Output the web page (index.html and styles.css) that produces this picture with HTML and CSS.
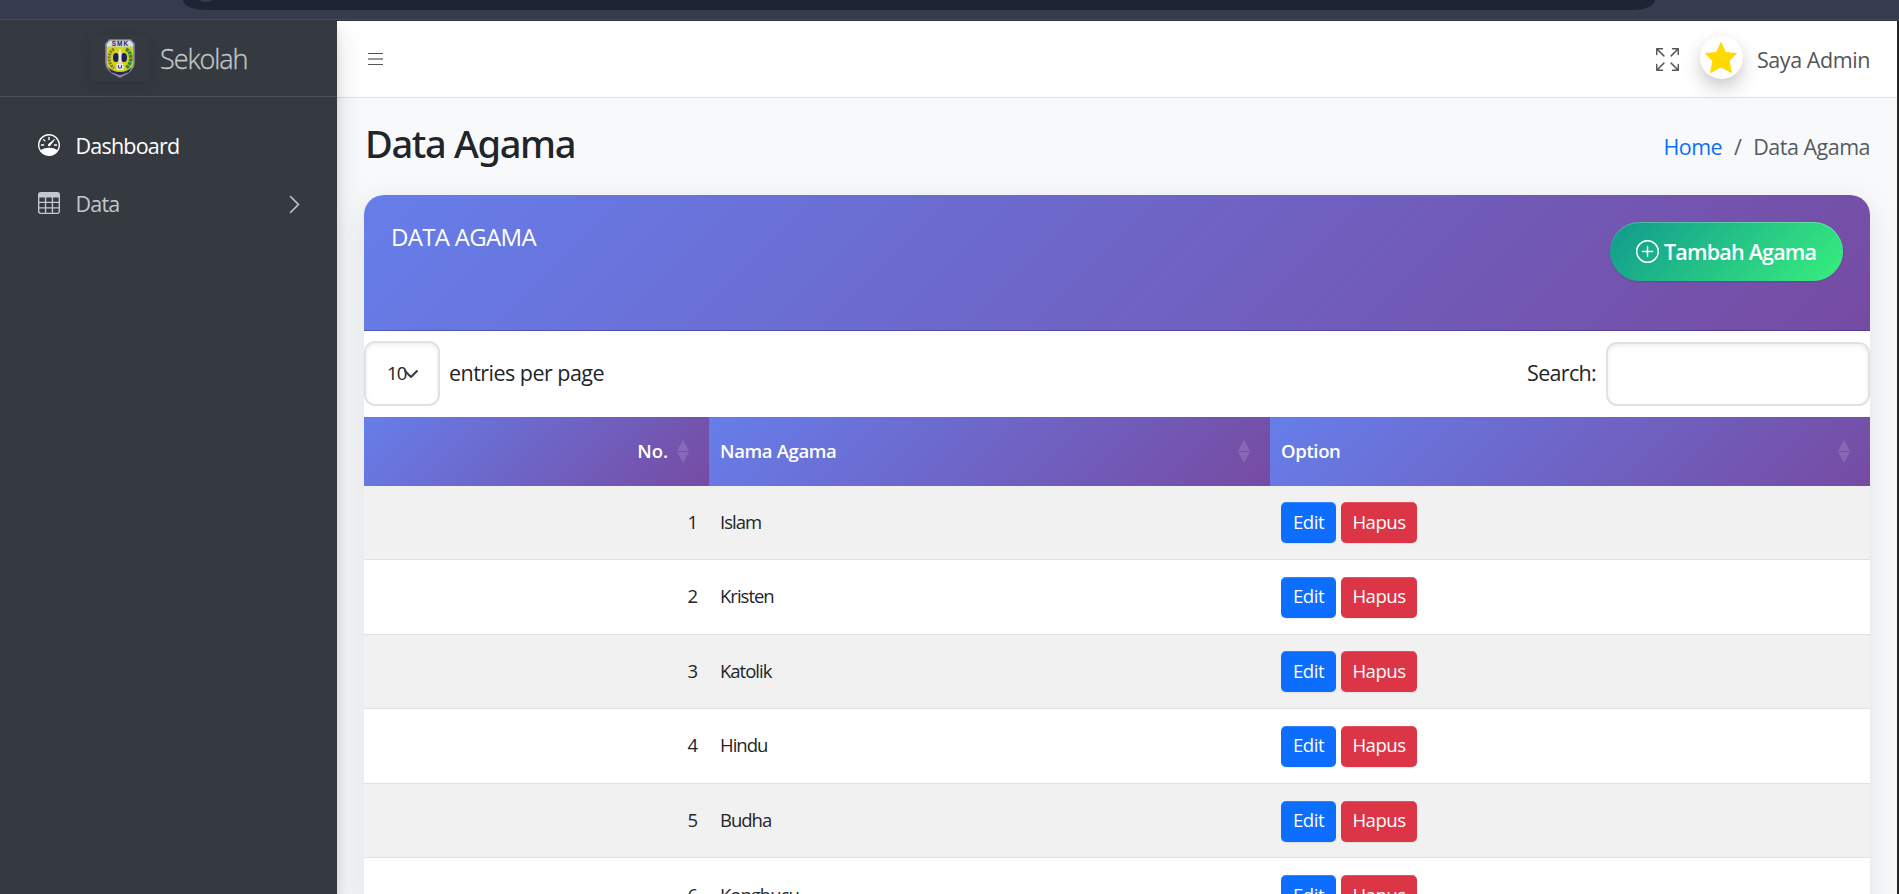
FILE: index.html
```html
<!DOCTYPE html>
<html lang="id">
<head>
<meta charset="utf-8">
<title>Data Agama</title>
<link rel="stylesheet" href="styles.css">
</head>
<body>
<div class="chrome"><div class="address"><span class="site-info"></span></div></div>
<div class="app">
  <aside class="sidebar">
    <a class="brand">
      <span class="brand-logo">
        <svg width="30" height="39" viewBox="0 0 30 39">
          <path d="M4.500 1H25.500L29 5V24C29 31 22 35 15 38C8 35 1 31 1 24V5Z" fill="#d3d01c" stroke="#8485b5" stroke-width="1.600"/>
          <path d="M4.800 1.800H25.200L28 5V7.500H2V5Z" fill="#d9dcec"/>
          <text class="logo-text" x="15.500" y="7.300" text-anchor="middle">SMK</text>
          <path d="M9 10C2 14 3 25 9 29" fill="none" stroke="#77792b" stroke-width="3" stroke-dasharray="2 1"/>
          <path d="M21 10C28 14 27 25 21 29" fill="none" stroke="#2c8450" stroke-width="3.600" stroke-dasharray="3 .7"/>
          <ellipse cx="11" cy="18.500" rx="3" ry="4.500" fill="#17215c"/>
          <ellipse cx="19" cy="18.500" rx="3" ry="4.500" fill="#17215c"/>
          <path d="M15 9L16.500 13V24H13.500V13Z" fill="#e8e7d6"/>
          <path d="M3 28Q8 33 15 33Q22 33 27 28L24 33L15 36.500L6 33Z" fill="#262b58"/>
          <rect x="11.500" y="24.500" width="7" height="6.500" rx="1" fill="#e5e7f4"/>
          <path d="M13.500 26V29H16.500V26" fill="none" stroke="#3a4179"/>
        </svg>
      </span>
      <span class="t brand-text">Sekolah</span>
    </a>
    <nav class="menu">
      <a class="menu-item active">
        <svg class="ico" viewBox="0 0 16 16"><path d="M8 2a.5.5 0 0 1 .5.5V4a.5.5 0 0 1-1 0V2.500A.5.5 0 0 1 8 2zM3.732 3.732a.5.5 0 0 1 .707 0l.915.914a.5.5 0 1 1-.708.708l-.914-.915a.5.5 0 0 1 0-.707zM2 8a.5.5 0 0 1 .5-.5h1.586a.5.5 0 0 1 0 1H2.500A.5.5 0 0 1 2 8zm9.500 0a.5.5 0 0 1 .5-.5h1.500a.5.5 0 0 1 0 1H12a.5.5 0 0 1-.5-.5zm.754-4.246a.389.389 0 0 0-.527-.02L7.547 7.310A.91.91 0 1 0 8.850 8.569l3.434-4.297a.389.389 0 0 0-.029-.518z"/><path fill-rule="evenodd" d="M6.664 15.889A8 8 0 1 1 9.336.11a8 8 0 0 1-2.672 15.780zm-4.665-4.283A11.945 11.945 0 0 1 8 10c2.186 0 4.236.585 6.001 1.606a7 7 0 1 0-12.002 0z"/></svg>
        <span class="t">Dashboard</span>
      </a>
      <a class="menu-item">
        <svg class="ico" viewBox="0 0 16 16"><path d="M0 2a2 2 0 0 1 2-2h12a2 2 0 0 1 2 2v12a2 2 0 0 1-2 2H2a2 2 0 0 1-2-2V2zm15 2h-4v3h4V4zm0 4h-4v3h4V8zm0 4h-4v3h3a1 1 0 0 0 1-1v-2zm-5 3v-3H6v3h4zm-5 0v-3H1v2a1 1 0 0 0 1 1h3zm-4-4h4V8H1v3zm0-4h4V4H1v3zm5-3v3h4V4H6zm4 4H6v3h4V8z"/></svg>
        <span class="t">Data</span>
        <svg class="chevron" viewBox="0 0 16 16"><path fill-rule="evenodd" d="M4.646 1.646a.5.5 0 0 1 .708 0l6 6a.5.5 0 0 1 0 .708l-6 6a.5.5 0 0 1-.708-.708L10.293 8 4.646 2.354a.5.5 0 0 1 0-.708z"/></svg>
      </a>
    </nav>
  </aside>
  <main class="main">
    <header class="navbar">
      <svg class="burger" viewBox="0 0 15 14"><path d="M0 1.500H15M0 12.500H15" stroke="#555" stroke-width="1"/><path d="M0 7H15" stroke="#999" stroke-width="2"/></svg>
      <svg class="full" viewBox="0 0 16 16"><path d="M5.828 10.172a.5.5 0 0 0-.707 0l-4.096 4.096V11.500a.5.5 0 0 0-1 0v3.975a.5.5 0 0 0 .5.5H4.500a.5.5 0 0 0 0-1H1.732l4.096-4.096a.5.5 0 0 0 0-.707zm4.344 0a.5.5 0 0 1 .707 0l4.096 4.096V11.500a.5.5 0 1 1 1 0v3.975a.5.5 0 0 1-.5.5H11.500a.5.5 0 0 1 0-1h2.768l-4.096-4.096a.5.5 0 0 1 0-.707zm0-4.344a.5.5 0 0 0 .707 0l4.096-4.096V4.500a.5.5 0 1 0 1 0V.525a.5.5 0 0 0-.5-.5H11.500a.5.5 0 0 0 0 1h2.768l-4.096 4.096a.5.5 0 0 0 0 .707zm-4.344 0a.5.5 0 0 1-.707 0L1.025 1.732V4.500a.5.5 0 0 1-1 0V.525a.5.5 0 0 1 .5-.5H4.500a.5.5 0 0 1 0 1H1.732l4.096 4.096a.5.5 0 0 1 0 .707z"/></svg>
      <span class="avatar"><svg width="32" height="31" viewBox="0 0 32 31"><path d="M16 .5L20.500 10.500L31.500 11.500L24 19L26.500 30.500L16 25L5.500 30.500L8 19L.5 11.500L11.500 10.500Z" fill="#ffd900" stroke="#ffd900" stroke-linejoin="round"/></svg></span>
      <span class="t user">Saya Admin</span>
    </header>
    <div class="page-head">
      <h3 class="t">Data Agama</h3>
      <div class="crumbs"><a class="t home">Home</a><span class="t slash">/</span><span class="t here">Data Agama</span></div>
    </div>
    <section class="card">
      <div class="card-head">
        <span class="t card-title">DATA AGAMA</span>
        <button class="add"><svg viewBox="0 0 16 16"><path d="M8 15A7 7 0 1 1 8 1a7 7 0 0 1 0 14zm0 1A8 8 0 1 0 8 0a8 8 0 0 0 0 16z"/><path d="M8 4a.5.5 0 0 1 .5.5v3h3a.5.5 0 0 1 0 1h-3v3a.5.5 0 0 1-1 0v-3h-3a.5.5 0 0 1 0-1h3v-3A.5.5 0 0 1 8 4z"/></svg><span class="t">Tambah Agama</span></button>
      </div>
      <div class="tools">
        <div class="select"><span class="t">10</span><svg viewBox="0 0 16 16"><path d="m2 5 6 6 6-6" fill="none" stroke="#343a40" stroke-width="2" stroke-linecap="round" stroke-linejoin="round"/></svg></div>
        <span class="t per-page">entries per page</span>
        <label class="t search-label">Search:</label>
        <input class="search" type="text">
      </div>
      <div class="table">
        <div class="row head">
          <div class="cell no"><span class="t">No.</span><svg class="sort" viewBox="0 0 12 23"><path d="M6 0L12 11H0ZM0 12H12L6 23Z"/></svg></div>
          <div class="cell name"><span class="t">Nama Agama</span><svg class="sort" viewBox="0 0 12 23"><path d="M6 0L12 11H0ZM0 12H12L6 23Z"/></svg></div>
          <div class="cell opt"><span class="t">Option</span><svg class="sort" viewBox="0 0 12 23"><path d="M6 0L12 11H0ZM0 12H12L6 23Z"/></svg></div>
        </div>
        <div class="row first odd"><div class="cell no"><span class="t">1</span></div><div class="cell"><span class="t">Islam</span></div><div class="cell"><button class="btn edit"><span class="t">Edit</span></button><button class="btn del"><span class="t">Hapus</span></button></div></div>
        <div class="row"><div class="cell no"><span class="t">2</span></div><div class="cell"><span class="t">Kristen</span></div><div class="cell"><button class="btn edit"><span class="t">Edit</span></button><button class="btn del"><span class="t">Hapus</span></button></div></div>
        <div class="row odd"><div class="cell no"><span class="t">3</span></div><div class="cell"><span class="t">Katolik</span></div><div class="cell"><button class="btn edit"><span class="t">Edit</span></button><button class="btn del"><span class="t">Hapus</span></button></div></div>
        <div class="row"><div class="cell no"><span class="t">4</span></div><div class="cell"><span class="t">Hindu</span></div><div class="cell"><button class="btn edit"><span class="t">Edit</span></button><button class="btn del"><span class="t">Hapus</span></button></div></div>
        <div class="row odd"><div class="cell no"><span class="t">5</span></div><div class="cell"><span class="t">Budha</span></div><div class="cell"><button class="btn edit"><span class="t">Edit</span></button><button class="btn del"><span class="t">Hapus</span></button></div></div>
        <div class="row"><div class="cell no"><span class="t">6</span></div><div class="cell"><span class="t">Konghucu</span></div><div class="cell"><button class="btn edit"><span class="t">Edit</span></button><button class="btn del"><span class="t">Hapus</span></button></div></div>
      </div>
    </section>
  </main>
</div>
</body>
</html>
```
FILE: styles.css
```css
* { box-sizing: border-box; }
body {
  margin: 0;
  width: 1899px;
  height: 894px;
  overflow: hidden;
  background: #262626;
  color: #212529;
  font: 21.5px/32px "Open Sans", "Noto Sans", sans-serif;
}
.t { display: inline-block; white-space: nowrap; padding-bottom: 2px; }
.chrome {
  height: 21px;
  background: #343c4d;
  border-bottom: 1px solid #32373e;
  box-shadow: inset 0 -1px #3f4a59;
}
.address {
  width: 1472px;
  height: 10px;
  margin-left: 183px;
  padding-left: 11px;
  background: #1d2534;
  border-radius: 0 0 22px 22px / 0 0 10px 10px;
  overflow: hidden;
}
.site-info {
  display: block;
  width: 24px;
  height: 24px;
  margin-top: -22px;
  border-radius: 50%;
  background: #343c4d;
}
.app { display: flex; width: 1897px; height: 874px; margin-top: -1px; overflow: hidden; }
.sidebar {
  width: 337px;
  flex: none;
  background: #353940;
  position: relative;
  z-index: 2;
  box-shadow: 0 14px 28px rgba(0,0,0,.13), 0 10px 10px rgba(0,0,0,.1);
}
.brand {
  display: flex;
  align-items: center;
  height: 77px;
  padding-left: 90px;
  border-bottom: 1px solid #4b5057;
}
.brand-logo {
  display: flex;
  justify-content: center;
  width: 59px;
  height: 46px;
  padding-top: 4px;
  margin-right: 11px;
  box-shadow: 0 10px 20px rgba(0,0,0,.06), 0 3px 12px rgba(0,0,0,.04);
}
.logo-text { font: bold 6.500px "Liberation Sans", sans-serif; letter-spacing: 1px; fill: #1b2063; }
.brand-text { font-size: 27px; font-weight: 300; letter-spacing: -1.05px; color: #c5c8cb; -webkit-text-stroke: .3px #c5c8cb; padding: 2px 0 0; }
.menu { padding: 20px 0 0 37px; }
.menu-item { display: flex; align-items: center; height: 58px; letter-spacing: -.8px; color: #c2c7d0; }
.menu-item .t { padding-bottom: 0; }
.menu-item.active { color: #fff; }
.ico { width: 24px; height: 22px; margin-right: 14.5px; fill: currentColor; margin-top: -3px; }
.chevron { width: 21px; height: 21px; margin-left: auto; margin-right: 32px; fill: currentColor; stroke: currentColor; stroke-width: .3; }
.main {
  flex: 1;
  margin-top: 1px;
  background: #f8f9fb;
}
.navbar {
  display: flex;
  align-items: center;
  height: 77px;
  padding: 0 27px 0 31px;
  background: #fff;
  border-bottom: 1px solid #dee2e6;
  color: #555;
}
.burger { width: 15px; height: 14px; }
.full { width: 23px; height: 23px; margin-left: auto; margin-right: 21px; fill: #555; }
.avatar {
  display: flex;
  justify-content: center;
  width: 43px;
  height: 43px;
  padding-top: 6px;
  margin-top: -4px;
  margin-right: 14px;
  border-radius: 50%;
  box-shadow: 0 10px 20px rgba(0,0,0,.17), 0 4px 14px rgba(0,0,0,.06);
}
.user { letter-spacing: -.43px; padding: 2px 0 0; }
.page-head {
  display: flex;
  justify-content: space-between;
  height: 97px;
  padding: 21px 27px 0 28px;
}
h3 { margin: 0; font: 500 38px/48px "Noto Sans", sans-serif; letter-spacing: -1.35px; }
.crumbs { display: flex; padding-top: 12px; letter-spacing: -.5px; color: #555b61; }
.home { color: #0d6efd; }
.slash { width: 31px; text-align: center; }
.card {
  width: 1506px;
  height: 760px;
  margin-left: 27px;
  background: #fff;
  border-radius: 20px 20px 0 0;
  box-shadow: 0 8px 32px rgba(0,0,0,.1);
}
.card-head {
  display: flex;
  justify-content: space-between;
  height: 136px;
  padding: 27px 27px 0 27px;
  background: linear-gradient(135deg, #667eea 0%, #764ba2 100%);
  border-bottom: 1px solid rgba(40,40,130,.45);
  border-radius: 20px 20px 0 0;
  color: #fff;
}
.card-title { font-size: 24px; letter-spacing: -.68px; margin-top: -1px; }
.add {
  display: flex;
  align-items: center;
  width: 233px;
  height: 59px;
  padding: 0 0 0 26px;
  border: 0;
  border-radius: 30px;
  background: linear-gradient(135deg, #11998e 0%, #38ef7d 100%);
  box-shadow: inset 0 1px rgba(255,255,255,.25), 0 1px 2px rgba(0,0,0,.15);
  color: #fff;
  font: 600 21.5px/32px "Open Sans", sans-serif;
  letter-spacing: -.8px;
}
.add .t { padding-bottom: 0; }
.add svg { width: 23px; height: 23px; margin-right: 5px; fill: #fff; }
.tools { display: flex; align-items: center; height: 86px; letter-spacing: -.53px; }
.select {
  display: flex;
  align-items: center;
  width: 76px;
  height: 65px;
  margin-right: 9px;
  margin-bottom: 1px;
  padding-left: 21px;
  border: 2px solid #dee2e6;
  border-radius: 11px;
  box-shadow: inset 0 2px 4px rgba(0,0,0,.07);
  font-size: 18.6px;
  letter-spacing: -1px;
}
.select svg { width: 16px; height: 16px; margin-left: -3px; flex: none; }
.search-label { margin-left: auto; margin-right: 10px; letter-spacing: -.68px; }
.search {
  width: 264px;
  height: 64px;
  border: 2px solid #dee2e6;
  border-radius: 11px;
  box-shadow: inset 0 2px 4px rgba(0,0,0,.07);
  background: #fff;
}
.row {
  display: grid;
  grid-template-columns: 345px 561px 600px;
  height: 74.600px;
  font-size: 18.5px;
  letter-spacing: -1px;
}
.row.head { height: 69px; color: #fff; font-weight: 600; letter-spacing: -.35px; }
.row.first { height: 74px; }
.cell { display: flex; align-items: center; padding: 1px 11px 0; border-bottom: 1px solid #dee2e6; }
.odd .cell { background: #f1f1f1; }
.cell.no { justify-content: flex-end; letter-spacing: 0; }
.head .cell { padding: 0 20px 0 11px; border: 0; background: linear-gradient(135deg, #667eea 0%, #764ba2 100%); }
.first .cell { padding-top: 0; }
.sort { width: 12px; height: 23px; margin-left: auto; fill: rgba(255,255,255,.14); }
.no .sort { margin-left: 9px; }
.btn {
  height: 41px;
  padding: 0;
  border: 0;
  border-radius: 5px;
  color: #fff;
  font: 18.6px/26px "Open Sans", sans-serif;
  letter-spacing: -.5px;
  box-shadow: inset 0 1px rgba(255,255,255,.15), 0 1px 1px rgba(0,0,0,.08);
}
.edit { width: 55px; margin-right: 5px; background: #0d6efd; }
.del { width: 76px; background: #dc3545; }
```
